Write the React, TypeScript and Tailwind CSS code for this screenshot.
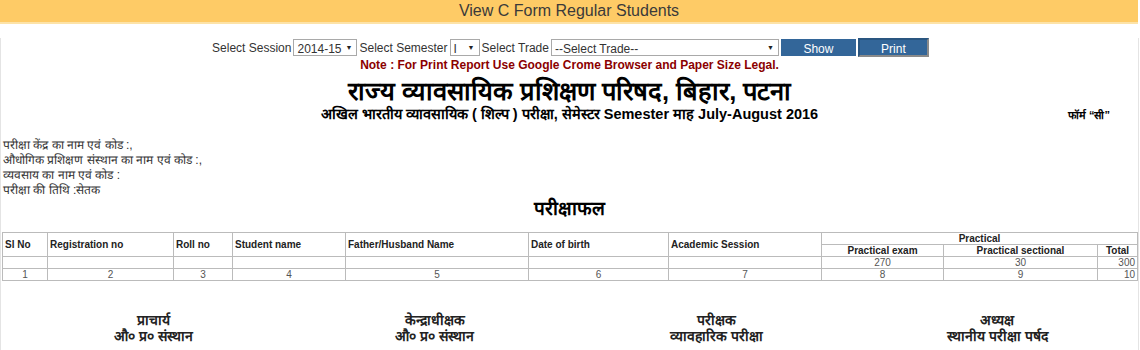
function Select({ w, label }: { w: string; label: string }) {
  return (
    <span className={`relative inline-flex items-center h-[17px] border border-[#a9a9a9] bg-white ${w}`}>
      <select className="appearance-none w-full h-full pl-[3px] pr-[14px] text-[12px] bg-transparent outline-none">
        <option>{label}</option>
      </select>
      <span className="absolute right-[4px] top-[3px] text-[7px] leading-[10px] text-[#222] pointer-events-none">▼</span>
    </span>
  )
}

export default function App() {
  const sig = [
    ['प्राचार्य', 'औ० प्र० संस्थान'],
    ['केन्द्राधीक्षक', 'औ० प्र० संस्थान'],
    ['परीक्षक', 'व्यावहारिक परीक्षा'],
    ['अध्यक्ष', 'स्थानीय परीक्षा पर्षद'],
  ]
  const cols = ['w-[45px]', 'w-[126px]', 'w-[59px]', 'w-[113px]', 'w-[183px]', 'w-[140px]', 'w-[153px]', 'w-[122px]', 'w-[154px]', 'w-[40px]']
  const td = 'border border-[#bbb] px-[2px] h-[12px] leading-[11px]'
  return (
    <div className="w-[1140px] h-[350px] bg-white font-['Liberation_Sans',Arial,sans-serif] text-[#333] overflow-hidden">
      <div className="h-[24px] mr-[2px] bg-[#fecb66] border-b-[2px] border-[#fde3a8] flex items-center justify-center text-[16px] text-[#3a3a3a]">
        View C Form Regular Students
      </div>
      <div className="h-[326px] border-x border-[#e4e4e4] mr-[1px]">
        <div className="flex items-center justify-center gap-[2px] mt-[14px] text-[12px] text-[#333] pl-[2px]">
          <span>Select Session</span>
          <Select w="w-[64px]" label="2014-15" />
          <span>Select Semester</span>
          <Select w="w-[30px]" label="I" />
          <span>Select Trade</span>
          <Select w="w-[228px]" label="--Select Trade--" />
          <button className="h-[17px] w-[75px] bg-[#336699] text-white text-[12px] border border-[#336699]">Show</button>
          <button className="h-[19px] w-[71px] bg-[#336699] text-white text-[12px] border-2 border-[#8a8a8a] border-t-[#2a5680] border-l-[#2a5680]">Print</button>
        </div>
        <p className="text-center text-[12px] font-bold text-[#8b0000] mt-[1px] leading-[15px]">
          Note : For Print Report Use Google Crome Browser and Paper Size Legal.
        </p>
        <div className="relative">
          <h1 className="text-center text-[25.5px] font-bold text-black leading-[30px] mt-[3px]">
            राज्य व्यावसायिक प्रशिक्षण परिषद, बिहार, पटना
          </h1>
          <p className="text-center text-[14.5px] font-bold text-black leading-[17px]">
            अखिल भारतीय व्यावसायिक ( शिल्प ) परीक्षा, सेमेस्टर Semester माह July-August 2016
          </p>
          <span className="absolute right-[28px] top-[31px] text-[11px] font-bold text-black">फॉर्म “सी”</span>
        </div>
        <div className="mt-[15px] text-[12px] leading-[15px] text-[#333] pl-[2px]">
          <div>परीक्षा केंद्र का नाम एवं कोड :,</div>
          <div>औधोगिक प्रशिक्षण संस्थान का नाम एवं कोड :,</div>
          <div>व्यवसाय का नाम एवं कोड :</div>
          <div>परीक्षा की तिथि :सेतक</div>
        </div>
        <h2 className="text-center text-[19px] font-bold text-black mt-0 leading-[22px]">परीक्षाफल</h2>
        <table className="mt-[12px] ml-[1px] border-collapse border border-[#888] text-[10px] w-[1135px] table-fixed">
          <colgroup>
            {cols.map((c, i) => (
              <col key={i} className={c} />
            ))}
          </colgroup>
          <tbody>
            <tr className="font-bold text-[#222]">
              <td rowSpan={2} className={td + ' text-left'}>Sl No</td>
              <td rowSpan={2} className={td + ' text-left'}>Registration no</td>
              <td rowSpan={2} className={td + ' text-left'}>Roll no</td>
              <td rowSpan={2} className={td + ' text-left'}>Student name</td>
              <td rowSpan={2} className={td + ' text-left'}>Father/Husband Name</td>
              <td rowSpan={2} className={td + ' text-left'}>Date of birth</td>
              <td rowSpan={2} className={td + ' text-left'}>Academic Session</td>
              <td colSpan={3} className={td + ' text-center'}>Practical</td>
            </tr>
            <tr className="font-bold text-[#222]">
              <td className={td + ' text-center'}>Practical exam</td>
              <td className={td + ' text-center'}>Practical sectional</td>
              <td className={td + ' text-center'}>Total</td>
            </tr>
            <tr className="text-[#555]">
              <td className={td}></td>
              <td className={td}></td>
              <td className={td}></td>
              <td className={td}></td>
              <td className={td}></td>
              <td className={td}></td>
              <td className={td}></td>
              <td className={td + ' text-center'}>270</td>
              <td className={td + ' text-center'}>30</td>
              <td className={td + ' text-right'}>300</td>
            </tr>
            <tr className="text-[#555] text-center">
              {['1', '2', '3', '4', '5', '6', '7', '8', '9'].map((n) => (
                <td key={n} className={td}>{n}</td>
              ))}
              <td className={td + ' text-right'}>10</td>
            </tr>
          </tbody>
        </table>
        <div className="grid grid-cols-4 mt-[31px] pl-[12px]">
          {sig.map(([a, b], i) => (
            <div key={i} className="text-center text-[14px] font-bold text-[#222] leading-[16px]">
              <div>{a}</div>
              <div>{b}</div>
            </div>
          ))}
        </div>
      </div>
    </div>
  )
}
